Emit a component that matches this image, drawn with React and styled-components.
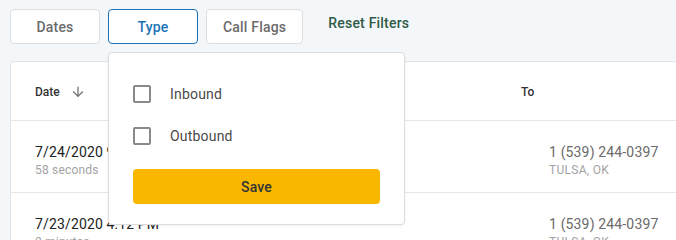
import React from 'react';
import styled, { createGlobalStyle } from 'styled-components';

const GlobalStyle = createGlobalStyle`
    html, body{
        overflow: hidden;
    }
    body{
        margin: 0;
        background: #f4f7fa;
        font-family: Roboto, "Liberation Sans", sans-serif;
    }
`;

const calls = [
    { date: '7/24/2020 9:41 AM', duration: '58 seconds', to: '1 (539) 244-0397', place: 'TULSA, OK' },
    { date: '7/23/2020 4:12 PM', duration: '2 minutes', to: '1 (539) 244-0397', place: 'TULSA, OK' },
    { date: '7/22/2020 11:05 AM', duration: '1 minute', to: '1 (539) 244-0397', place: 'TULSA, OK' },
];

const options = ['Inbound', 'Outbound'];

const App = () => {
    return (
        <Page>
            <GlobalStyle />
            <Toolbar>
                <FilterButton>Dates</FilterButton>
                <Anchor>
                    <FilterButton $active>Type</FilterButton>
                    <Popover>
                        {options.map((opt) => (
                            <OptionRow key={opt}>
                                <Checkbox />
                                {opt}
                            </OptionRow>
                        ))}
                        <SaveButton>Save</SaveButton>
                    </Popover>
                </Anchor>
                <FilterButton>Call Flags</FilterButton>
                <ResetButton>Reset Filters</ResetButton>
            </Toolbar>

            <Card>
                <HeadRow>
                    <HeadCell>
                        Date
                        <svg width="16" height="16" viewBox="0 0 24 24">
                            <path fill="#757575" d="M20 12l-1.41-1.41L13 16.17V4h-2v12.17l-5.58-5.59L4 12l8 8 8-8z" />
                        </svg>
                    </HeadCell>
                    <HeadCell>To</HeadCell>
                </HeadRow>
                {calls.map((call) => (
                    <Row key={call.date}>
                        <Cell>
                            <Main $dark>{call.date}</Main>
                            <Sub>{call.duration}</Sub>
                        </Cell>
                        <Cell $indent>
                            <Main>{call.to}</Main>
                            <Sub $caps>{call.place}</Sub>
                        </Cell>
                    </Row>
                ))}
            </Card>
        </Page>
    );
};

const Page = styled.div`
    padding: 9px 0 0 10px;
    min-height: 100vh;
    box-sizing: border-box;
    overflow: hidden;
`;

const Toolbar = styled.div`
    display: flex;
    align-items: flex-start;
    gap: 8px;
    position: relative;
    z-index: 2;
`;

const Anchor = styled.div`
    position: relative;
`;

const FilterButton = styled.button`
    box-sizing: border-box;
    height: 35px;
    min-width: 90px;
    padding: 0 16px;
    background: #fff;
    border: 1px solid ${(p) => (p.$active ? '#1b72b8' : '#dcdfe2')};
    border-radius: 4px;
    color: ${(p) => (p.$active ? '#1b72b8' : '#6b6b6b')};
    font-family: Roboto, sans-serif;
    font-size: 14px;
    font-weight: 500;
    letter-spacing: 0.2px;
    cursor: pointer;
`;

const ResetButton = styled.button`
    background: none;
    border: none;
    padding: 6px 16px 0 17px;
    color: #2f5a46;
    font-family: Roboto, sans-serif;
    font-size: 14px;
    font-weight: 500;
    letter-spacing: 0.2px;
    line-height: 17px;
    cursor: pointer;
`;

const Popover = styled.div`
    position: absolute;
    top: 43px;
    left: 0;
    width: 297px;
    box-sizing: border-box;
    padding: 20px 24px 20px;
    background: #fff;
    border: 1px solid #dcdcdc;
    border-radius: 4px;
    box-shadow: 0 1px 3px rgba(0, 0, 0, 0.06);
`;

const OptionRow = styled.label`
    display: flex;
    align-items: center;
    gap: 19px;
    height: 42px;
    font-size: 14px;
    color: #4a4a4a;
    letter-spacing: 0.2px;
`;

const Checkbox = styled.span`
    box-sizing: border-box;
    width: 18px;
    height: 18px;
    border: 2px solid #8a8a8a;
    border-radius: 2px;
`;

const SaveButton = styled.button`
    display: block;
    width: 100%;
    height: 35px;
    margin-top: 12px;
    background: #f9b700;
    border: none;
    border-radius: 4px;
    color: #333;
    font-family: Roboto, sans-serif;
    font-size: 14px;
    font-weight: 500;
    letter-spacing: 0.2px;
`;

const Card = styled.div`
    margin-top: 17px;
    margin-right: -40px;
    background: #fff;
    border: 1px solid #e2e4e6;
    border-radius: 4px;
`;

const HeadRow = styled.div`
    display: grid;
    grid-template-columns: 486px 1fr;
    height: 58px;
    padding-left: 24px;
    border-bottom: 1px solid #e6e6e6;
`;

const HeadCell = styled.div`
    display: flex;
    align-items: center;
    gap: 10px;
    padding-top: 2px;
    font-size: 12px;
    font-weight: 500;
    color: #333;
`;

const Row = styled.div`
    display: grid;
    grid-template-columns: 486px 1fr;
    height: 71px;
    padding-left: 24px;
    border-bottom: 1px solid #e6e6e6;
`;

const Cell = styled.div`
    display: flex;
    flex-direction: column;
    justify-content: center;
    padding-left: ${(p) => (p.$indent ? '28px' : '0')};
    padding-top: 6px;
`;

const Main = styled.div`
    font-size: 14px;
    color: ${(p) => (p.$dark ? '#222' : '#6a6a6a')};
    letter-spacing: 0.15px;
    line-height: 20px;
    white-space: nowrap;
`;

const Sub = styled.div`
    font-size: 12px;
    color: #a3a3a3;
    line-height: 16px;
    letter-spacing: ${(p) => (p.$caps ? '0.3px' : '0.2px')};
`;

export default App;
